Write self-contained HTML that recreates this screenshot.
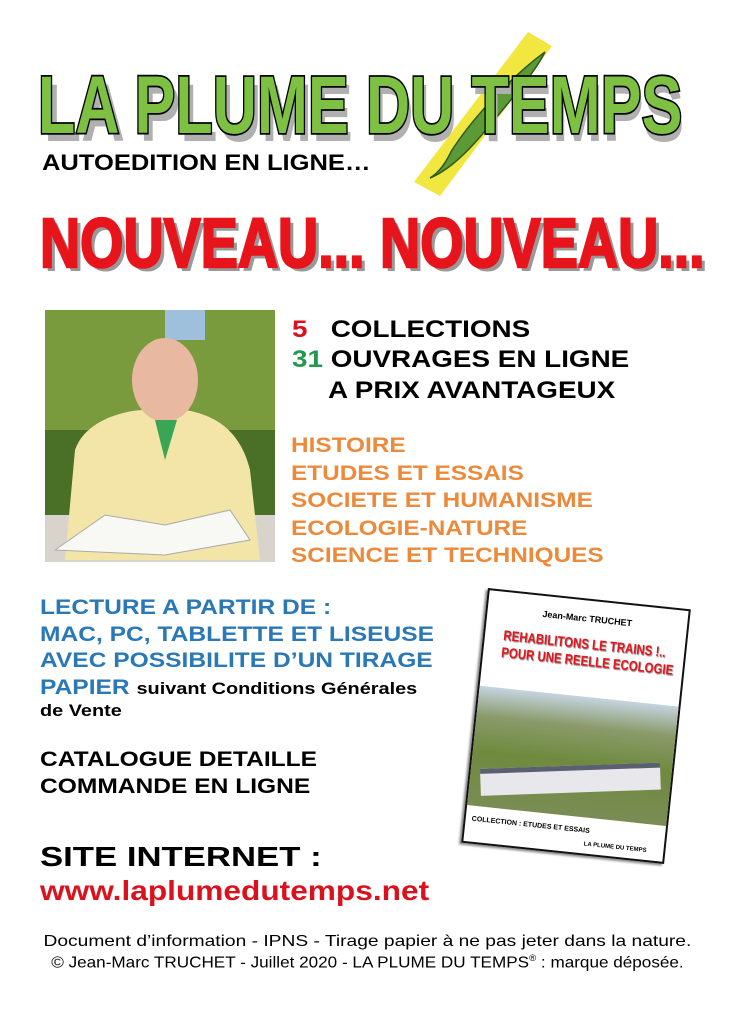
<!DOCTYPE html>
<html><head><meta charset="utf-8"><style>
body{margin:0;width:735px;height:1024px;background:#fff;position:relative;overflow:hidden;font-family:"Liberation Sans",sans-serif;font-weight:bold}
.a{position:absolute;white-space:nowrap;line-height:1;transform-origin:0 0}
</style></head><body>
<svg class="a" style="left:0;top:0" width="735" height="300">
 <polygon points="528,32 552,46 440,196 414,182" fill="#f2e640"/>
 <path d="M545,52 C520,70 478,110 452,150 C446,162 440,172 430,178 C450,170 470,150 490,125 C515,95 535,72 545,52Z" fill="#5b9a35" stroke="#2f5a1c" stroke-width="1.5"/>
 <text x="44" y="141" font-size="82" font-weight="bold" fill="#b0b0b0" transform="translate(44 0) scale(0.74 1) translate(-44 0)" font-family="Liberation Sans" textLength="865">LA PLUME DU TEMPS</text>
 <text x="38" y="133" font-size="82" font-weight="bold" fill="#7dc042" stroke="#000" stroke-width="3.5" paint-order="stroke" transform="translate(38 0) scale(0.745 1) translate(-38 0)" font-family="Liberation Sans" textLength="865">LA PLUME DU TEMPS</text>
 <text x="44" y="271" font-size="70" font-weight="bold" fill="#999" transform="translate(44 0) scale(0.795 1) translate(-44 0)" font-family="Liberation Sans">NOUVEAU... NOUVEAU...</text>
 <text x="40" y="267" font-size="70" font-weight="bold" fill="#e8141c" stroke="#e8141c" stroke-width="2.5" transform="translate(40 0) scale(0.795 1) translate(-40 0)" font-family="Liberation Sans">NOUVEAU... NOUVEAU...</text>
</svg>
<div class="a" style="left:42px;top:152px;font-size:22px;transform:scaleX(1.16)">AUTOEDITION EN LIGNE…</div>
<svg class="a" style="left:45px;top:310px" width="230" height="252">
 <rect width="230" height="252" fill="#4a7028"/>
 <rect x="0" y="0" width="230" height="120" fill="#7a9a3e"/>
 <rect x="120" y="0" width="40" height="30" fill="#9fc0dc"/>
 <rect x="0" y="205" width="230" height="47" fill="#d8d4cc"/>
 <path d="M20,250 L30,140 C40,110 80,100 100,100 L140,100 C170,105 195,120 205,160 L215,250Z" fill="#f3e4a8"/>
 <ellipse cx="120" cy="70" rx="33" ry="42" fill="#e8b9a0"/>
 <path d="M110,110 L120,150 L132,110Z" fill="#3aa655"/>
 <path d="M10,240 L60,205 L120,215 L185,200 L205,230 L120,245Z" fill="#f8f8f4" stroke="#aaa"/>
</svg>
<div class="a" style="left:292px;top:318px;font-size:24px;transform:scaleX(1.16)"><span style="color:#d9121e">5</span>&nbsp;&nbsp; COLLECTIONS</div>
<div class="a" style="left:292px;top:348px;font-size:24px;transform:scaleX(1.16)"><span style="color:#1f9a4e">31</span> OUVRAGES EN LIGNE</div>
<div class="a" style="left:328px;top:379px;font-size:24px;transform:scaleX(1.16)">A PRIX AVANTAGEUX</div>
<div class="a" style="left:291px;top:432px;font-size:21px;color:#ec8a3c;line-height:27.5px;transform:scaleX(1.16)">HISTOIRE<br>ETUDES ET ESSAIS<br>SOCIETE ET HUMANISME<br>ECOLOGIE-NATURE<br>SCIENCE ET TECHNIQUES</div>
<div class="a" style="left:40px;top:595px;font-size:21px;color:#2a78b6;line-height:26.7px;transform:scaleX(1.17)">LECTURE A PARTIR DE :<br>MAC, PC, TABLETTE ET LISEUSE<br>AVEC POSSIBILITE D’UN TIRAGE<br>PAPIER <span style="color:#000;font-size:17px">suivant Conditions Générales</span></div>
<div class="a" style="left:40px;top:702px;font-size:17px;transform:scaleX(1.17)">de Vente</div>
<div class="a" style="left:40px;top:746px;font-size:21px;line-height:27px;transform:scaleX(1.17)">CATALOGUE DETAILLE<br>COMMANDE EN LIGNE</div>
<div class="a" style="left:40px;top:843px;font-size:28px;transform:scaleX(1.24)">SITE INTERNET :</div>
<div class="a" style="left:40px;top:877px;font-size:28px;color:#d9121e;transform:scaleX(1.13)">www.laplumedutemps.net</div>
<div class="a" style="left:0;width:735px;text-align:center;top:934px;font-size:16px;font-weight:normal;transform:scaleX(1.2);transform-origin:368px 0">Document d’information - IPNS - Tirage papier à ne pas jeter dans la nature.</div>
<div class="a" style="left:0;width:735px;text-align:center;top:954px;font-size:16px;font-weight:normal;transform:scaleX(1.07);transform-origin:368px 0">© Jean-Marc TRUCHET - Juillet 2020 - LA PLUME DU TEMPS<sup style="font-size:9px">®</sup> : marque déposée.</div>
<div class="a" style="left:474px;top:598px;width:200px;height:252px;border:2px solid #111;background:#fff;transform:rotate(6deg);transform-origin:50% 50%;box-shadow:-2px 2px 2px #888">
 <div style="text-align:center;font-size:9px;margin-top:14px">Jean-Marc TRUCHET</div>
 <div style="text-align:center;font-size:14px;color:#e8141c;margin-top:12px;line-height:17px;transform:scaleX(0.82);text-shadow:1px 1px 1px #888">REHABILITONS LE TRAINS !..<br>POUR UNE REELLE ECOLOGIE</div>
 <div style="position:absolute;left:0;top:96px;width:200px;height:120px;background:linear-gradient(#c5d4e0 0,#8a9a6a 25%,#6f8a3e 55%,#7a8c55 100%)">
  <div style="position:absolute;left:10px;top:70px;width:180px;height:22px;background:#e8e8ec;border-top:5px solid #5a6070;transform:rotate(-8deg)"></div>
 </div>
 <div style="position:absolute;left:6px;top:226px;font-size:7px">COLLECTION : ETUDES ET ESSAIS</div>
 <div style="position:absolute;left:120px;top:240px;font-size:6px">LA PLUME DU TEMPS</div>
</div>
</body></html>
